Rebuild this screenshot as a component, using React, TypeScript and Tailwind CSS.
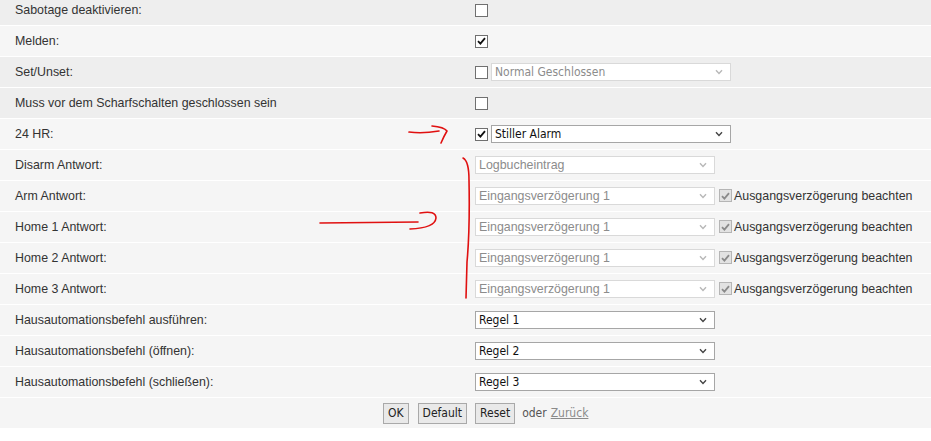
import React from "react";

const ARIAL = "font-['Liberation_Sans',Arial,sans-serif]";
const TAHOMA = "font-['DejaVu_Sans_Condensed','DejaVu_Sans',sans-serif]";

function Check({ checked, disabled }: { checked?: boolean; disabled?: boolean }) {
  return (
    <div
      className={
        "w-[13px] h-[13px] shrink-0 border flex items-center justify-center " +
        (disabled ? "border-[#b5b5b5] bg-[#e2e2e2]" : "border-[#707070] bg-white")
      }
    >
      {checked && (
        <svg width="9" height="8" viewBox="0 0 9 8">
          <path
            d="M1 4.2 L3.4 6.6 L8 1.2"
            fill="none"
            stroke={disabled ? "#8a8a8a" : "#111"}
            strokeWidth="1.8"
          />
        </svg>
      )}
    </div>
  );
}

function Select({
  value,
  width,
  disabled,
  tahoma,
}: {
  value: string;
  width: string;
  disabled?: boolean;
  tahoma?: boolean;
}) {
  return (
    <div
      className={
        width +
        " h-[18px] shrink-0 flex items-center justify-between bg-white border pl-[3px] pr-[7px] leading-none " +
        (tahoma ? TAHOMA + " text-[12px] " : ARIAL + " text-[12.4px] ") +
        (disabled ? "border-[#d9d9d9] text-[#8c8c8c]" : "border-[#a6a6a6] text-[#111]")
      }
    >
      <span>{value}</span>
      <svg width="8" height="6" viewBox="0 0 8 6">
        <path
          d="M1 1.2 L4 4.4 L7 1.2"
          fill="none"
          stroke={disabled ? "#b8b8b8" : "#444"}
          strokeWidth="1.4"
        />
      </svg>
    </div>
  );
}

function Row({
  label,
  bg,
  children,
}: {
  label: string;
  bg: string;
  children?: React.ReactNode;
}) {
  return (
    <div className={"grid grid-cols-[475px_1fr] h-[31px] items-center border-b border-white " + bg}>
      <div className={"pl-[15px] text-[12.4px] text-[#333] " + ARIAL}>{label}</div>
      <div className="flex items-center">{children}</div>
    </div>
  );
}

function Btn({ children }: { children: React.ReactNode }) {
  return (
    <div
      className={
        "h-[21px] flex items-center px-[4px] border border-[#a9a9a9] bg-[#e9e9e9] text-[12px] text-[#222] " +
        TAHOMA
      }
    >
      {children}
    </div>
  );
}

export default function App() {
  const dark = "bg-[#eeeeee]";
  const light = "bg-[#f6f6f6]";
  const mid = "bg-[#f5f5f5]";
  const arm = (label: string) => (
    <Row label={label} bg={mid}>
      <Select value="Eingangsverzögerung 1" width="w-[240px]" disabled />
      <div className="ml-[4px]">
        <Check checked disabled />
      </div>
      <span className={"ml-[2px] text-[12.4px] text-[#333] " + ARIAL}>
        Ausgangsverzögerung beachten
      </span>
    </Row>
  );
  return (
    <div className="relative w-[931px] h-[441px] overflow-hidden bg-white">
      <div className="-mt-[5px]">
        <Row label="Sabotage deaktivieren:" bg={dark}>
          <Check />
        </Row>
        <Row label="Melden:" bg={light}>
          <Check checked />
        </Row>
        <Row label="Set/Unset:" bg={dark}>
          <Check />
          <div className="ml-[3px]">
            <Select value="Normal Geschlossen" width="w-[240px]" disabled tahoma />
          </div>
        </Row>
        <Row label="Muss vor dem Scharfschalten geschlossen sein" bg={dark}>
          <Check />
        </Row>
        <Row label="24 HR:" bg={light}>
          <Check checked />
          <div className="ml-[3px]">
            <Select value="Stiller Alarm" width="w-[240px]" tahoma />
          </div>
        </Row>
        <Row label="Disarm Antwort:" bg={mid}>
          <Select value="Logbucheintrag" width="w-[240px]" disabled />
        </Row>
        {arm("Arm Antwort:")}
        {arm("Home 1 Antwort:")}
        {arm("Home 2 Antwort:")}
        {arm("Home 3 Antwort:")}
        <Row label="Hausautomationsbefehl ausführen:" bg={mid}>
          <Select value="Regel 1" width="w-[240px]" tahoma />
        </Row>
        <Row label="Hausautomationsbefehl (öffnen):" bg={mid}>
          <Select value="Regel 2" width="w-[240px]" tahoma />
        </Row>
        <Row label="Hausautomationsbefehl (schließen):" bg={mid}>
          <Select value="Regel 3" width="w-[240px]" tahoma />
        </Row>
        <div className={"h-[30px] flex items-center pl-[383px] " + mid}>
          <Btn>OK</Btn>
          <div className="ml-[9px]">
            <Btn>Default</Btn>
          </div>
          <div className="ml-[8px]">
            <div className="px-[2px] contents">
              <Btn>Reset</Btn>
            </div>
          </div>
          <span className={"ml-[7px] text-[12px] text-[#555] " + TAHOMA}>oder </span>
          <span className={"ml-[4px] text-[12px] text-[#8a8a8a] underline " + TAHOMA}>Zurück</span>
        </div>
      </div>

      <svg
        className="absolute left-0 top-0 pointer-events-none"
        width="931"
        height="441"
        viewBox="0 0 931 441"
      >
        <g fill="none" stroke="#e01010" strokeWidth="1.6" strokeLinecap="round" strokeLinejoin="round">
          <path d="M409 132 Q422 134 439 131" />
          <path d="M432 126 Q444 127 447 131 Q444 136 441 143" />
          <path d="M320 223 L418 222" />
          <path d="M420 213 Q436 210 436 218 Q435 228 410 229" />
          <path d="M463 158 Q469 161 469 180 Q470 230 467 262 L466 298" />
        </g>
      </svg>
    </div>
  );
}
